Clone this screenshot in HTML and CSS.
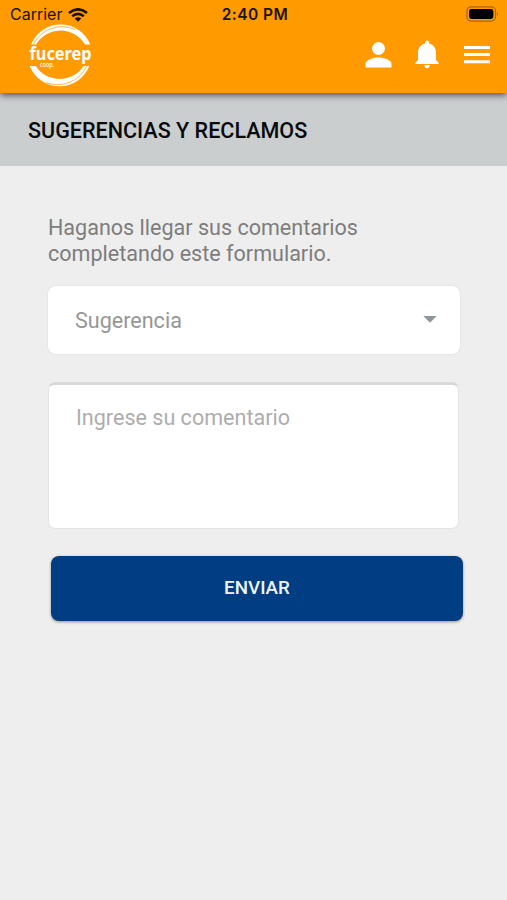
FILE: index.html
```html
<!DOCTYPE html>
<html lang="es">
<head>
<meta charset="utf-8">
<title>Sugerencias y reclamos</title>
<link rel="stylesheet" href="styles.css">
</head>
<body>
<header class="header">
  <div class="status">
    <div class="carrier"><span>Carrier</span>
      <svg width="20" height="14" viewBox="0 0 20 14"><g fill="none" stroke="#1c1200" stroke-width="2.6"><path d="M1 5Q10-2.4 19 5"/><path d="M4.2 8.3Q10 3.4 15.8 8.3"/></g><path d="M6.7 10.6Q10 7.8 13.3 10.6L10 13.8Z" fill="#1c1200"/></svg>
    </div>
    <div class="time">2:40 PM</div>
    <svg class="battery" width="34" height="16" viewBox="0 0 34 16"><rect x=".9" y=".9" width="28.6" height="14.2" rx="4.2" fill="none" stroke="#a86500" stroke-width="1.2"/><rect x="3" y="3" width="24.4" height="10" rx="2.4" fill="#000"/><path d="M31 5.8q2 2.2 0 4.4z" fill="#a86500"/></svg>
  </div>
  <div class="nav">
    <svg class="logo" width="68" height="64" viewBox="0 0 68 64" role="img" aria-label="fucerep coop.">
      <g fill="#fff"><path d="M3 20.500A32 32 0 0 1 62.300 20.500H57A28.500 28.500 0 0 0 8 20.500Z"/><path d="M1.700 42H7.700A28.500 28.500 0 0 0 55.500 42H61.300A32 32 0 0 1 1.700 42Z"/></g>
      <g fill="none" stroke="#ff9b00" stroke-width=".7"><path d="M5.500 20A32 32 0 0 1 47 5.500"/><path d="M18 58.500A32 32 0 0 0 58.500 42.500"/></g>
      <text class="brand" x="1.500" y="36" textLength="62" lengthAdjust="spacingAndGlyphs">fucerep</text>
      <text class="coop" x="12" y="43" textLength="14" lengthAdjust="spacingAndGlyphs">coop.</text>
    </svg>
    <div class="actions">
      <svg width="28" height="28" viewBox="0 0 28 28" fill="#fff"><circle cx="14.500" cy="7.500" r="6.500"/><path d="M1.500 26.500V23C1.500 19 9 16.500 14.500 16.500S27.500 19 27.500 23V26.500Z"/></svg>
      <svg width="24" height="29" viewBox="0 0 24 29" fill="#fff"><path d="M12 .5C10.800 .5 10 1.300 10 2.500V3.500C5.500 4.500 3 8 3 13V20L.3 22.700V24H23.700V22.700L21 20V13C21 8 18.500 4.500 14 3.500V2.500C14 1.300 13.200 .5 12 .5Z"/><path d="M9.300 25H14.700Q14.500 28.200 12 28.200T9.300 25Z"/></svg>
      <svg width="26" height="18" viewBox="0 0 26 18" fill="#fff"><path d="M0 0H26V3H0ZM0 7H26V10H0ZM0 14.300H26V17.300H0Z"/></svg>
    </div>
  </div>
</header>
<h1 class="title"><span>SUGERENCIAS Y RECLAMOS</span></h1>
<main class="form">
  <p class="intro">Haganos llegar sus comentarios<br>completando este formulario.</p>
  <div class="select"><span>Sugerencia</span><svg width="14" height="7" viewBox="0 0 14 7"><path d="M.3 0H13.700L7 6.800Z" fill="#8d979c"/></svg></div>
  <div class="comment"><span>Ingrese su comentario</span></div>
  <button class="send" type="button"><span>ENVIAR</span></button>
</main>
</body>
</html>
```
FILE: styles.css
```css
* { box-sizing: border-box; }
body { margin: 0; width: 507px; min-height: 900px; background: #eee; font-family: Roboto, sans-serif; }
svg { display: block; flex: none; }
.header { position: relative; height: 93px; background: #ff9b00; box-shadow: 0 2px 7px rgba(0,0,0,.65); }
.status { display: grid; grid-template-columns: 1fr auto 1fr; align-items: center; height: 24px; padding: 5px 7px 0 10px; font-family: Inter, sans-serif; color: #1c1200; line-height: 19px; }
.carrier { display: flex; align-items: center; gap: 6px; font-size: 16px; letter-spacing: 0; }
.time { font-size: 15.500px; font-weight: 600; letter-spacing: .45px; }
.battery { justify-self: end; margin-top: -1px; }
.nav { display: flex; justify-content: space-between; height: 69px; padding: 0 17px 0 28px; }
.logo { overflow: visible; }
.brand { font: 700 18.500px "Noto Sans", sans-serif; fill: #fff; }
.coop { font: 600 7px "Open Sans", sans-serif; fill: #fff; }
.actions { display: flex; align-items: center; height: 61px; }
.actions svg:nth-child(2) { margin: 0 25px 0 23px; }
.title { display: flex; align-items: center; height: 73px; margin: 0; padding: 2px 28px 0; background: #cacecf; color: #080a0d; font-size: 21.550px; font-weight: 500; line-height: 26px; }
.form { padding: 48px 44px 0 48px; }
.intro { margin: 0 0 20px; padding-top: 1px; height: 52px; color: #7d7d7d; font-size: 21.550px; line-height: 25.500px; white-space: nowrap; }
.select { display: flex; align-items: center; justify-content: space-between; width: 412px; height: 68px; padding: 0 23px 0 27px; border-radius: 8px; background: #fff; color: #969696; font-size: 21.550px; box-shadow: 0 0 2px rgba(0,0,0,.12); }
.select svg { margin-top: -2px; }
.comment { width: 411px; height: 147px; margin: 28px 0 27px; padding: 20px 26px; border: 1.500px solid #e4e4e4; border-top: 3px solid #d8d8d8; border-radius: 7px; background: #fff; color: #adadad; font-size: 21.550px; line-height: 26px; }
.comment span { margin-left: 1px; }
.send { display: flex; align-items: center; justify-content: center; width: 412px; height: 65px; margin: 0 0 0 3px; padding: 0 0 2px; border: 0; border-radius: 8px; background: #003d82; color: #f1f5ff; font: 500 18.800px Roboto, sans-serif; box-shadow: 0 1px 3px rgba(0,0,0,.4); }
```
